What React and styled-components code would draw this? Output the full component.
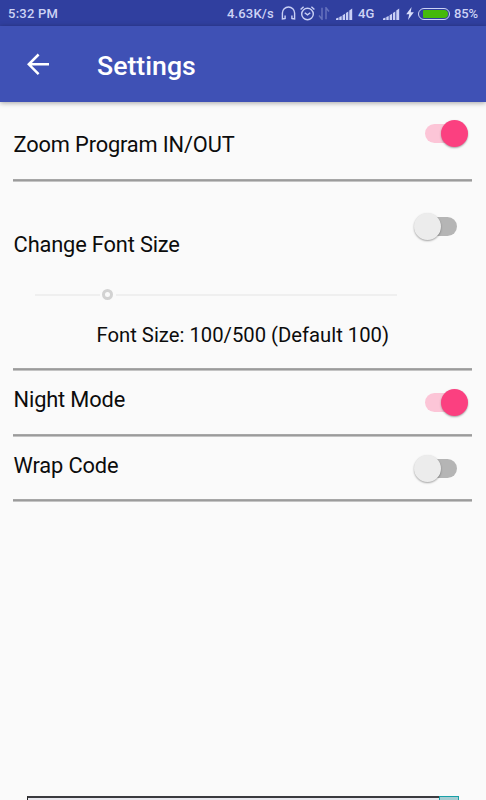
import React, { useState } from 'react';
import styled, { createGlobalStyle } from 'styled-components';

const App = () => {
   const [zoom, setZoom] = useState(true);
   const [changeSize, setChangeSize] = useState(false);
   const [night, setNight] = useState(true);
   const [wrap, setWrap] = useState(false);
   const fontSize = 100;

   return (
      <Screen>
         <GlobalStyle />
         <StatusBar>
            <Clock>5:32 PM</Clock>
            <StatusIcons />
         </StatusBar>
         <AppBar>
            <BackButton aria-label="Back">
               <svg width="24" height="24" viewBox="0 0 24 24" fill="none" stroke="#fff" strokeWidth="2.5">
                  <path d="M23 12.3H2.8M12.6 2.5l-9.8 9.8 9.8 9.8" />
               </svg>
            </BackButton>
            <Title>Settings</Title>
         </AppBar>
         <Content>
            <Row $height={77} $labelTop={29} $toggleTop={18}>
               <Label>Zoom Program IN/OUT</Label>
               <Toggle on={zoom} onToggle={() => setZoom(!zoom)} />
            </Row>
            <Divider />
            <Row $height={91} $labelTop={49} $toggleTop={31}>
               <Label>Change Font Size</Label>
               <Toggle on={changeSize} onToggle={() => setChangeSize(!changeSize)} />
            </Row>
            <Slider>
               <SliderLine $width={65} />
               <SliderThumb />
               <SliderLine />
            </Slider>
            <SizeText>Font Size: {fontSize}/500 (Default 100)</SizeText>
            <Divider />
            <Row $height={63} $labelTop={15} $toggleTop={18}>
               <Label>Night Mode</Label>
               <Toggle on={night} onToggle={() => setNight(!night)} />
            </Row>
            <Divider />
            <Row $height={62} $labelTop={15} $toggleTop={18}>
               <Label>Wrap Code</Label>
               <Toggle on={wrap} onToggle={() => setWrap(!wrap)} />
            </Row>
            <Divider />
         </Content>
         <AdBanner>
            <AdBody />
            <AdCorner />
         </AdBanner>
      </Screen>
   );
}

const Toggle = ({ on, onToggle }) => (
   <Switch role="switch" aria-checked={on} onClick={onToggle}>
      <Track $on={on}>
         <Thumb $on={on} />
      </Track>
   </Switch>
);

const Signal = () => (
   <svg width="17" height="12" viewBox="0 0 17 12" fill="#c9d0f5">
      <path d="M0 12v-1.5l2.5-1V12zM3.3 12V9.1l2.4-1.2V12zM6.6 12V7.3L9 5.7V12zM9.9 12V5l2.4-1.6V12zM13.3 12V2.4L16.2.4V12z" />
   </svg>
);

const StatusIcons = () => (
   <Indicators>
      <Speed>4.63K/s</Speed>
      <svg width="15" height="15" viewBox="0 0 15 15" fill="none" stroke="#c9d0f5" strokeWidth="1.4">
         <path d="M4.4 12.5L1.4 13V7.1a6.1 6.1 0 0 1 12.2 0V13l-3-.5M4.1 13V9.4M10.9 13V9.4" />
      </svg>
      <Alarm width="15" height="15" viewBox="0 0 15 15" fill="none" stroke="#c9d0f5" strokeWidth="1.4">
         <circle cx="7.5" cy="8" r="5.8" />
         <path d="M.6 3.5L3.6.7M14.4 3.5L11.4.7M4.7 6.7l2.8 2.2 2.8-2.2" />
      </Alarm>
      <Transfer width="12" height="13" viewBox="0 0 12 13" fill="none" stroke="#6572bd" strokeWidth="1.5">
         <path d="M4 .8v11.4L1 8.6M8 12.2V.8l3 3.6" />
      </Transfer>
      <Signal />
      <Network>4G</Network>
      <Signal />
      <Bolt width="8" height="13" viewBox="0 0 8 13" fill="#d9defa">
         <path d="M5.6 0L.2 7.2h3L2 13l5.8-7.7H4.7z" />
      </Bolt>
      <Battery><Charge /></Battery>
      <Percent>85%</Percent>
   </Indicators>
);

/* Styles */
const GlobalStyle = createGlobalStyle`
   * {
      box-sizing: border-box;
   }

   body {
      margin: 0;
      background: #fafafa;
      font-family: Roboto, "Liberation Sans", sans-serif;
   }

   svg {
      display: block;
      flex: none;
   }

   button {
      padding: 0;
      border: 0;
      background: none;
   }
`;

const Screen = styled.main`
   display: flex;
   flex-direction: column;
   width: 486px;
   height: 800px;
   overflow: hidden;
   background: #fafafa;
`;

const StatusBar = styled.header`
   display: flex;
   justify-content: space-between;
   align-items: center;
   flex: none;
   height: 26px;
   padding: 1px 8px 0 8px;
   background: #303f9f;
   color: #cdd3f5;
   font-size: 13px;
   font-weight: 500;
   white-space: nowrap;
`;

const Clock = styled.span`
   letter-spacing: .25px;
`;

const Indicators = styled.div`
   display: flex;
   align-items: center;
`;

const Speed = styled.span`
   width: 49px;
   margin-right: 5px;
   letter-spacing: .15px;
`;

const Alarm = styled.svg`
   margin: 0 3px 0 4px;
`;

const Transfer = styled.svg`
   margin-right: 6px;
`;

const Network = styled.span`
   width: 17px;
   margin: 0 8px 0 5px;
`;

const Bolt = styled.svg`
   margin: 0 4px 0 6px;
`;

const Battery = styled.span`
   width: 32px;
   height: 12px;
   margin-right: 4px;
   padding: 1px 1px 1px 4px;
   border: 1px solid #cdd3f5;
   border-radius: 6px;
`;

const Charge = styled.span`
   display: block;
   height: 100%;
   border-radius: 1px 4px 4px 1px;
   background: #45b90b;
`;

const Percent = styled.span`
   width: 24px;
   letter-spacing: -.2px;
`;

const AppBar = styled.nav`
   display: flex;
   align-items: center;
   flex: none;
   height: 76px;
   padding-left: 26px;
   background: #3f51b5;
   box-shadow: 0 1px 5px rgba(0, 0, 0, .35);
`;

const BackButton = styled.button`
   width: 24px;
   height: 24px;
   margin-right: 47px;
`;

const Title = styled.h1`
   margin: 0;
   padding-top: 3px;
   color: #fff;
   font-size: 26.7px;
   font-weight: 500;
   line-height: 30px;
`;

const Content = styled.section`
   flex: 1;
   padding: 0 14px 0 13px;
`;

const Row = styled.div`
   display: flex;
   justify-content: space-between;
   align-items: flex-start;
   height: ${props => props.$height}px;
   padding-right: 4px;

   & > span {
      margin-top: ${props => props.$labelTop}px;
   }

   & > button {
      margin-top: ${props => props.$toggleTop}px;
   }
`;

const Label = styled.span`
   margin-left: .6px;
   color: #0c0c0c;
   font-size: 21.8px;
   letter-spacing: -.15px;
   line-height: 27px;
`;

const Divider = styled.div`
   height: 3px;
   background: linear-gradient(#a6a6a6 33%, #9b9b9b 33% 66%, #c4c4c4 66%);
`;

const Switch = styled.button`
   width: 54px;
   height: 27px;
   padding: 4px 11px;
`;

const Track = styled.span`
   display: flex;
   align-items: center;
   justify-content: ${props => props.$on ? 'flex-end' : 'flex-start'};
   width: 32px;
   height: 19px;
   border-radius: 10px;
   background: ${props => props.$on ? '#fcc5d7' : '#b5b5b5'};
`;

const Thumb = styled.span`
   flex: none;
   width: 27px;
   height: 27px;
   margin: 0 -11px;
   border-radius: 50%;
   background: ${props => props.$on ? '#fb4080' : '#ececec'};
   box-shadow: 0 1px 2px rgba(0, 0, 0, .35);
`;

const Slider = styled.div`
   display: flex;
   align-items: center;
   width: 362px;
   height: 43px;
   margin-left: 22px;
`;

const SliderLine = styled.span`
   flex: ${props => props.$width ? 'none' : 1};
   width: ${props => props.$width}px;
   height: 2px;
   background: #efefef;
`;

const SliderThumb = styled.span`
   width: 11px;
   height: 11px;
   margin: 0 3px 0 2px;
   border: 3px solid #d2d2d2;
   border-radius: 50%;
`;

const SizeText = styled.p`
   height: 52px;
   margin: 0;
   padding: 6px 0 0 83.5px;
   color: #0c0c0c;
   font-size: 20.25px;
   line-height: 26px;
`;

const AdBanner = styled.footer`
   display: flex;
   flex: none;
   height: 4px;
   margin: 0 27px;
`;

const AdBody = styled.div`
   flex: 1;
   border-top: 2px solid #3a3a3e;
   border-left: 1px solid #222;
   background: #e8e8ee;
`;

const AdCorner = styled.div`
   width: 20px;
   border: 1px solid #18a0a8;
   border-bottom: 0;
   background: #a5cdd2;
`;

export default App;
